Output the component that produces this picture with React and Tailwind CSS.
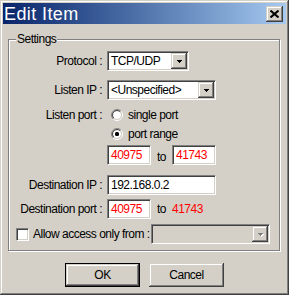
const sunken =
  "border border-t-[#808080] border-l-[#808080] border-b-white border-r-white shadow-[inset_1px_1px_0_#404040,inset_-1px_-1px_0_#D4D0C8]";
const raised =
  "bg-[#D4D0C8] shadow-[inset_-1px_-1px_0_#404040,inset_1px_1px_0_#D4D0C8,inset_-2px_-2px_0_#808080,inset_2px_2px_0_#fff]";

const DropButton = ({ disabled }) => (
  <div className={`w-[16px] h-[16px] mr-[1px] flex items-center justify-center ${raised}`}>
    <svg width="7" height="5" viewBox="0 0 7 5">
      {disabled && <path d="M2 2h5v1h-1v1h-1v1h-1v-1h-1v-1h-1z" fill="#fff" />}
      <path
        d="M1 1h5v1h-1v1h-1v1h-1v-1h-1v-1h-1z"
        fill={disabled ? "#808080" : "#000"}
      />
    </svg>
  </div>
);

const Select = ({ width, value, disabled }) => (
  <div
    className={`h-[20px] flex items-center shrink-0 ${sunken} ${disabled ? "bg-[#D4D0C8]" : "bg-white"}`}
    style={{ width }}
  >
    <span className="flex-1 pl-[3px] leading-none whitespace-nowrap">{value}</span>
    <DropButton disabled={disabled} />
  </div>
);

const Input = ({ width, value, red }) => (
  <div
    className={`h-[20px] flex items-center bg-white pl-[3px] shrink-0 ${sunken} ${red ? "text-[#FF0000]" : "text-black"}`}
    style={{ width }}
  >
    {value}
  </div>
);

const Radio = ({ checked }) => (
  <svg width="12" height="12" viewBox="0 0 12 12" className="shrink-0">
    <path d="M6 0.5a5.5 5.5 0 0 0 -3.9 9.4" stroke="#808080" fill="none" />
    <path d="M6 0.5a5.5 5.5 0 0 1 3.9 1.6" stroke="#808080" fill="none" />
    <path d="M9.9 2.1a5.5 5.5 0 0 1 -7.8 7.8" stroke="#fff" fill="none" />
    <circle cx="6" cy="6" r="4" fill="#fff" />
    <path d="M6 1.5a4.5 4.5 0 0 0 -3.2 7.7" stroke="#404040" fill="none" />
    <path d="M6 1.5a4.5 4.5 0 0 1 3.2 1.3" stroke="#404040" fill="none" />
    <path d="M9.2 2.8a4.5 4.5 0 0 1 -6.4 6.4" stroke="#D4D0C8" fill="none" />
    {checked && <rect x="4" y="4" width="4" height="4" rx="1.5" fill="#000" />}
  </svg>
);

const Label = ({ children }) => (
  <div className="w-[98px] text-right pr-[5px] shrink-0 whitespace-nowrap">{children}</div>
);

export default function App() {
  return (
    <div
      className="w-[289px] h-[295px] bg-[#D4D0C8] p-[3px] flex flex-col shadow-[inset_-1px_-1px_0_#404040,inset_1px_1px_0_#D4D0C8,inset_-2px_-2px_0_#808080,inset_2px_2px_0_#fff] text-[12px] tracking-[-0.5px] text-black"
      style={{ fontFamily: '"Liberation Sans", Arial, sans-serif' }}
    >
      {/* title bar */}
      <div className="h-[21px] flex items-center bg-gradient-to-r from-[#0A246A] to-[#A6CAF0] pl-[1px] pr-[3px]">
        <span className="flex-1 text-white text-[18px] tracking-[0.4px] leading-none">
          Edit Item
        </span>
        <div className={`w-[17px] h-[16px] flex items-center justify-center ${raised}`}>
          <svg width="9" height="8" viewBox="0 0 9 8">
            <path d="M0.5 0.5l8 7M8.5 0.5l-8 7" stroke="#000" strokeWidth="2" />
          </svg>
        </div>
      </div>

      {/* settings group */}
      <div className="relative mt-[15px] ml-[5px] mr-[6px] border border-[#808080] shadow-[inset_1px_1px_0_#fff,1px_1px_0_#fff] pb-[6px] flex flex-col">
        <span className="absolute left-[7px] top-[-8px] bg-[#D4D0C8] px-[1px] leading-[14px]">
          Settings
        </span>

        <div className="mt-[11px] h-[20px] flex items-center">
          <Label>Protocol :</Label>
          <Select width={82} value="TCP/UDP" />
        </div>

        <div className="mt-[9px] h-[20px] flex items-center">
          <Label>Listen IP :</Label>
          <Select width={109} value="<Unspecified>" />
        </div>

        <div className="mt-[7px] h-[16px] flex items-center">
          <Label>Listen port :</Label>
          <div className="pl-[4px] flex items-center gap-[5px]">
            <Radio />
            <span>single port</span>
          </div>
        </div>

        <div className="mt-[3px] h-[16px] flex items-center">
          <Label />
          <div className="pl-[4px] flex items-center gap-[5px]">
            <Radio checked />
            <span>port range</span>
          </div>
        </div>

        <div className="mt-[3px] h-[20px] flex items-center">
          <Label />
          <Input width={44} value="40975" red />
          <span className="w-[21px] text-center pt-[3px]">to</span>
          <Input width={44} value="41743" red />
        </div>

        <div className="mt-[10px] h-[20px] flex items-center">
          <Label>Destination IP :</Label>
          <Input width={109} value="192.168.0.2" />
        </div>

        <div className="mt-[4px] h-[20px] flex items-center">
          <Label>Destination port :</Label>
          <Input width={44} value="40975" red />
          <span className="w-[21px] text-center">to</span>
          <span className="text-[#FF0000]">41743</span>
        </div>

        <div className="mt-[5px] h-[20px] flex items-center pl-[7px]">
          <div className={`w-[13px] h-[13px] bg-white shrink-0 ${sunken}`} />
          <span className="ml-[4px] w-[118px] shrink-0 whitespace-nowrap">
            Allow access only from :
          </span>
          <Select width={119} value="" disabled />
        </div>
      </div>

      {/* buttons */}
      <div className="mt-[12px] flex justify-center gap-[9px]">
        <div className="w-[75px] h-[24px] border border-black">
          <div className={`w-full h-full flex items-center justify-center ${raised}`}>
            OK
          </div>
        </div>
        <div className={`w-[75px] h-[24px] flex items-center justify-center ${raised}`}>
          Cancel
        </div>
      </div>
    </div>
  );
}
